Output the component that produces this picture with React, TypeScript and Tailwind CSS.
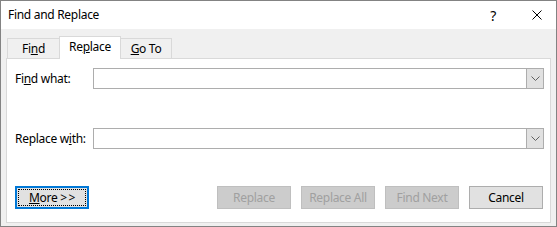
import React from "react";

const FONT = "font-['Noto_Sans','Open_Sans',sans-serif]";

function Combo() {
  return (
    <div className="flex h-[21px] flex-1 border border-[#adadad] bg-white">
      <div className="flex-1" />
      <div className="flex w-[17px] items-center justify-center border-l border-[#adadad] bg-[#e1e1e1]">
        <svg width="9" height="5" viewBox="0 0 9 5" fill="none">
          <path d="M0.5 0.5 L4.5 4.5 L8.5 0.5" stroke="#606060" strokeWidth="1" />
        </svg>
      </div>
    </div>
  );
}

function Btn({ label, disabled }: { label: React.ReactNode; disabled?: boolean }) {
  return (
    <div
      className={
        disabled
          ? "flex h-[23px] w-[74px] items-center justify-center border border-[#bfbfbf] bg-[#cccccc] text-[#a0a0a0]"
          : "flex h-[23px] w-[74px] items-center justify-center border border-[#adadad] bg-[#e1e1e1] text-black"
      }
    >
      {label}
    </div>
  );
}

export default function App() {
  return (
    <div className={`flex h-[227px] w-[557px] flex-col border border-[#838383] bg-[#f0f0f0] text-[12px] tracking-[-0.3px] text-black ${FONT}`}>
      {/* barra de título */}
      <div className="flex h-[28px] items-center bg-white pl-[7px]">
        <span className="flex-1">Find and Replace</span>
        <span className="mr-[36px] text-[14px]">?</span>
        <svg className="mr-[14px]" width="10" height="10" viewBox="0 0 10 10">
          <path d="M0.5 0.5 L9.5 9.5 M9.5 0.5 L0.5 9.5" stroke="#000" strokeWidth="1" />
        </svg>
      </div>

      <div className="flex flex-1 flex-col px-[5px] pb-[3px] pt-[7px]">
        {/* pestañas */}
        <div className="flex items-end pl-[1px]">
          <div className="flex h-[20px] w-[53px] items-center justify-center border border-b-0 border-[#d9d9d9] bg-[#f0f0f0]">
            Fi<span className="underline">n</span>d
          </div>
          <div className="relative z-10 -mb-px -ml-px flex h-[23px] w-[62px] items-center justify-center border border-b-0 border-[#d9d9d9] bg-white pb-[2px]">
            Re<span className="underline">p</span>lace
          </div>
          <div className="-ml-px flex h-[20px] w-[52px] items-center justify-center border border-b-0 border-[#d9d9d9] bg-[#f0f0f0]">
            <span className="underline">G</span>o To
          </div>
        </div>

        {/* panel */}
        <div className="flex flex-1 flex-col border border-[#d9d9d9] bg-white pl-[8px] pr-[6px] pt-[9px]">
          <div className="flex items-center">
            <span className="w-[78px]">
              Fi<span className="underline">n</span>d what:
            </span>
            <Combo />
          </div>
          <div className="mt-[39px] flex items-center">
            <span className="w-[78px]">
              Replace w<span className="underline">i</span>th:
            </span>
            <Combo />
          </div>

          <div className="mt-auto mb-[13px] flex items-center pr-[1px]">
            <div className="flex h-[23px] w-[74px] items-center justify-center border-2 border-[#0078d7] bg-[#e1e1e1] p-[1px]">
              <div className="flex h-full w-full items-center justify-center border border-dotted border-black">
                <span className="underline">M</span>ore&nbsp;&gt;&thinsp;&gt;
              </div>
            </div>
            <div className="flex-1" />
            <div className="flex gap-[10px]">
              <Btn label="Replace" disabled />
              <Btn label="Replace All" disabled />
              <Btn label="Find Next" disabled />
              <Btn label="Cancel" />
            </div>
          </div>
        </div>
      </div>
    </div>
  );
}
